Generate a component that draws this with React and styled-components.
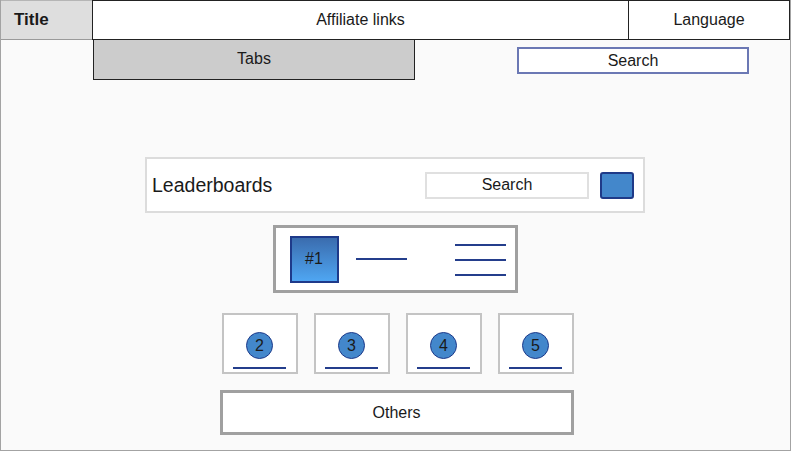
import React from "react";
import styled, { createGlobalStyle } from "styled-components";

const GlobalStyle = createGlobalStyle`
  html, body {
    margin: 0;
    padding: 0;
    background: #ffffff;
    font-family: "Liberation Sans", Arial, sans-serif;
    color: #1a1a1a;
  }
  * { box-sizing: border-box; }
`;

const Frame = styled.div`
  width: 791px;
  height: 451px;
  border: 1px solid #a3a3a3;
  border-top: none;
  background: #fafafa;
  display: flex;
  flex-direction: column;
`;

const Header = styled.div`
  display: flex;
  height: 40px;
`;

const TitleCell = styled.div`
  width: 91px;
  height: 40px;
  background: #dedede;
  border-top: 1px solid #b5b5b5;
  border-bottom: 1px solid #9a9a9a;
  font-weight: bold;
  font-size: 17px;
  display: flex;
  align-items: center;
  padding-left: 13px;
`;

const HeadCell = styled.div`
  width: ${(p) => p.$w}px;
  height: 40px;
  background: #ffffff;
  border: 1px solid #222;
  margin-left: ${(p) => (p.$overlap ? -1 : 0)}px;
  display: flex;
  align-items: center;
  justify-content: center;
  font-size: 16px;
`;

const SubBar = styled.div`
  display: flex;
  align-items: flex-start;
`;

const Tabs = styled.div`
  margin-left: 92px;
  width: 322px;
  height: 40px;
  background: #cccccc;
  border: 1px solid #222;
  border-top: none;
  display: flex;
  align-items: center;
  justify-content: center;
  font-size: 16px;
  padding-bottom: 1px;
`;

const TopSearch = styled.div`
  margin-left: 102px;
  margin-top: 7px;
  width: 232px;
  height: 27px;
  background: #ffffff;
  border: 2px solid #6b78b4;
  display: flex;
  align-items: center;
  justify-content: center;
  font-size: 16px;
`;

const Main = styled.div`
  display: flex;
  flex-direction: column;
  align-items: center;
  padding-right: 1px;
`;

const BoardBar = styled.div`
  margin-top: 77px;
  width: 500px;
  height: 56px;
  background: #ffffff;
  border: 2px solid #dcdcdc;
  display: flex;
  align-items: center;
  padding: 0 9px 0 5px;
`;

const BoardTitle = styled.div`
  font-size: 19.5px;
  flex: 1;
`;

const BoardSearch = styled.div`
  width: 164px;
  height: 27px;
  border: 2px solid #e0e0e0;
  display: flex;
  align-items: center;
  justify-content: center;
  font-size: 16px;
`;

const BlueButton = styled.div`
  margin-left: 11px;
  width: 34px;
  height: 27px;
  background: #4387cb;
  border: 2px solid #1f3a88;
  border-radius: 3px;
`;

const RankPanel = styled.div`
  margin-top: 12px;
  width: 245px;
  height: 68px;
  background: #ffffff;
  border: 3px solid #a0a0a0;
  display: flex;
  align-items: center;
  padding: 0 9px 0 14px;
`;

const FirstBox = styled.div`
  width: 49px;
  height: 47px;
  border: 2px solid #1e3a8a;
  background: linear-gradient(#3a6cae, #4fa6f2);
  display: flex;
  align-items: center;
  justify-content: center;
  font-size: 16px;
`;

const Line = styled.div`
  width: ${(p) => p.$w}px;
  height: 2px;
  background: #243e8c;
`;

const LineGap = styled.div`
  margin-left: 17px;
`;

const Menu = styled.div`
  margin-left: auto;
  display: flex;
  flex-direction: column;
  gap: 13px;
  margin-top: 1px;
`;

const Cards = styled.div`
  margin-top: 20px;
  margin-left: 5px;
  display: flex;
  gap: 16px;
`;

const Card = styled.div`
  width: 76px;
  height: 61px;
  background: #ffffff;
  border: 2px solid #c4c4c4;
  display: flex;
  flex-direction: column;
  align-items: center;
  padding-top: 17px;
`;

const Circle = styled.div`
  width: 27px;
  height: 27px;
  border-radius: 50%;
  background: #4387cb;
  border: 1px solid #1e3a8a;
  display: flex;
  align-items: center;
  justify-content: center;
  font-size: 16px;
`;

const Underline = styled.div`
  margin-top: 8px;
  width: 53px;
  height: 2px;
  background: #243e8c;
`;

const Others = styled.div`
  margin-top: 16px;
  margin-left: 3px;
  width: 354px;
  height: 45px;
  background: #ffffff;
  border: 3px solid #a0a0a0;
  display: flex;
  align-items: center;
  justify-content: center;
  font-size: 16px;
`;

const App = () => {
  return (
    <>
      <GlobalStyle />
      <Frame>
        <Header>
          <TitleCell>Title</TitleCell>
          <HeadCell $w={537}>Affiliate links</HeadCell>
          <HeadCell $w={162} $overlap>Language</HeadCell>
        </Header>
        <SubBar>
          <Tabs>Tabs</Tabs>
          <TopSearch>Search</TopSearch>
        </SubBar>
        <Main>
          <BoardBar>
            <BoardTitle>Leaderboards</BoardTitle>
            <BoardSearch>Search</BoardSearch>
            <BlueButton />
          </BoardBar>
          <RankPanel>
            <FirstBox>#1</FirstBox>
            <LineGap>
              <Line $w={51} />
            </LineGap>
            <Menu>
              <Line $w={51} />
              <Line $w={51} />
              <Line $w={51} />
            </Menu>
          </RankPanel>
          <Cards>
            {[2, 3, 4, 5].map((n) => (
              <Card key={n}>
                <Circle>{n}</Circle>
                <Underline />
              </Card>
            ))}
          </Cards>
          <Others>Others</Others>
        </Main>
      </Frame>
    </>
  );
};

export default App;
